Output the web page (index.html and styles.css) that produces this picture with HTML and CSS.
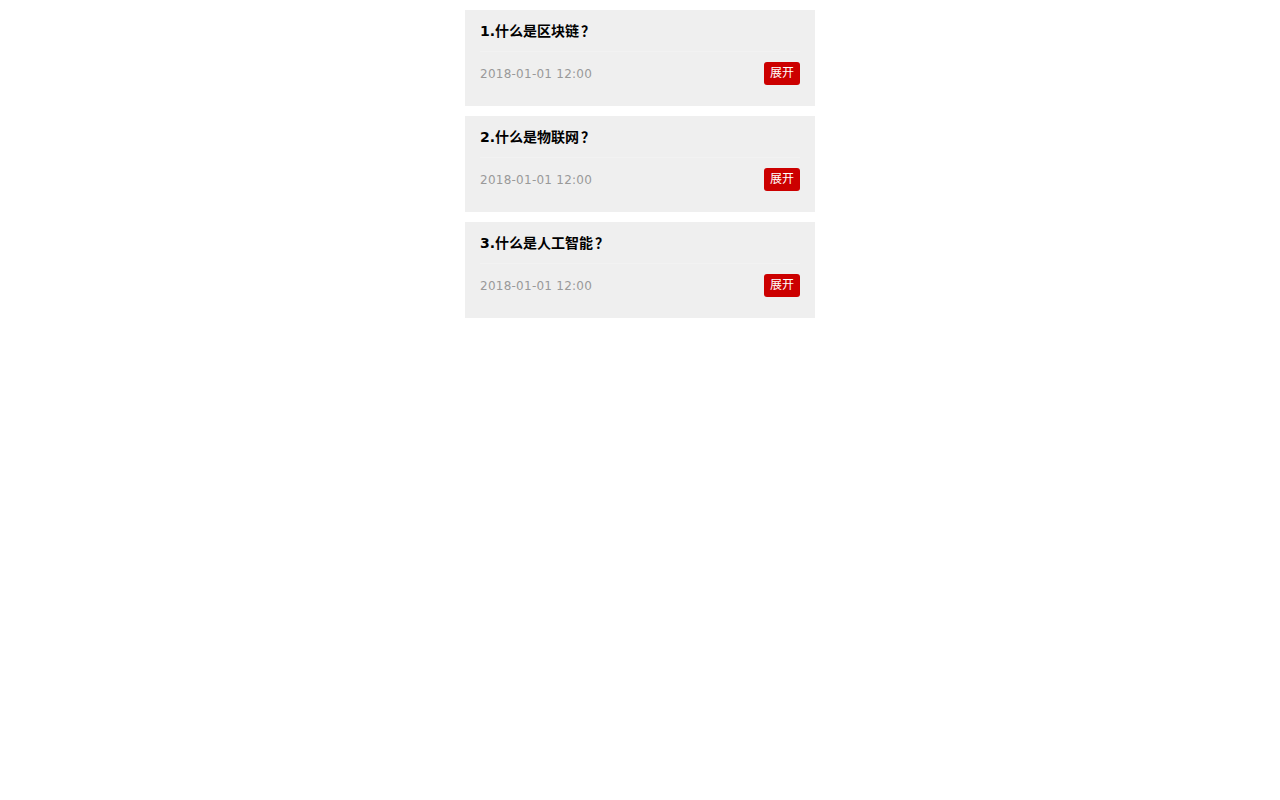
FILE: index.html
```html
<!DOCTYPE html>
<html>
<head>
<meta charset="utf-8">
<link rel="stylesheet" href="styles.css">
</head>
<body>
<div class="list">
  <div class="card">
    <div class="title">1.什么是区块链<span class="q">？</span></div>
    <div class="meta"><span class="date">2018-01-01 12:00</span><span class="btn">展开</span></div>
  </div>
  <div class="card">
    <div class="title">2.什么是物联网<span class="q">？</span></div>
    <div class="meta"><span class="date">2018-01-01 12:00</span><span class="btn">展开</span></div>
  </div>
  <div class="card">
    <div class="title">3.什么是人工智能<span class="q">？</span></div>
    <div class="meta"><span class="date">2018-01-01 12:00</span><span class="btn">展开</span></div>
  </div>
</div>
</body>
</html>
```
FILE: styles.css
```css
html, body {
  margin: 0;
  padding: 0;
  background: #fff;
  font-family: "DejaVu Sans", "Noto Sans CJK SC", sans-serif;
}
.list {
  width: 350px;
  margin: 10px auto 0;
  display: flex;
  flex-direction: column;
  gap: 10px;
}
.card {
  background: #efefef;
  padding: 0 15px;
  height: 96px;
  box-sizing: border-box;
}
.title {
  font-size: 14px;
  font-weight: bold;
  color: #000;
  line-height: 22px;
  height: 22px;
  padding: 10px 0 9px;
  border-bottom: 1px solid #f2f2f2;
}
.q {
  display: inline-block;
  width: 14px;
  text-align: center;
  margin-left: 2px;
}
.meta {
  display: flex;
  justify-content: space-between;
  align-items: center;
  padding-top: 10px;
  height: 23px;
}
.date {
  font-size: 12px;
  color: #999;
  letter-spacing: 0.25px;
}
.btn {
  background: #cc0000;
  color: #fff;
  font-size: 12px;
  width: 36px;
  height: 23px;
  line-height: 23px;
  text-align: center;
  border-radius: 3px;
}
```
